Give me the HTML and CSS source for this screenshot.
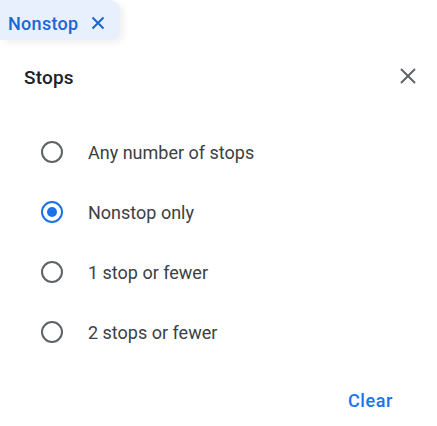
FILE: index.html
```html
<!DOCTYPE html>
<html>
<head>
<meta charset="utf-8">
<link rel="stylesheet" href="styles.css">
</head>
<body>
<div class="chip">
  <span class="chip-label">Nonstop</span>
  <svg class="chip-x" width="14" height="14" viewBox="0 0 14 14"><path d="M1.5 1.5 L12.5 12.5 M12.5 1.5 L1.5 12.5" stroke="#1967d2" stroke-width="2" fill="none"/></svg>
</div>
<div class="dialog">
  <div class="header">
    <span class="title">Stops</span>
    <svg class="close" width="16" height="16" viewBox="0 0 16 16"><path d="M1 1 L15 15 M15 1 L1 15" stroke="#5f6368" stroke-width="2" fill="none"/></svg>
  </div>
  <div class="list">
    <div class="row"><span class="radio"></span><span class="label">Any number of stops</span></div>
    <div class="row"><span class="radio checked"></span><span class="label">Nonstop only</span></div>
    <div class="row"><span class="radio"></span><span class="label">1 stop or fewer</span></div>
    <div class="row"><span class="radio"></span><span class="label">2 stops or fewer</span></div>
  </div>
  <div class="footer"><span class="clear">Clear</span></div>
</div>
</body>
</html>
```
FILE: styles.css
```css
html, body { margin: 0; padding: 0; background: #fff; }
body { font-family: Roboto, "Liberation Sans", sans-serif; width: 437px; height: 426px; overflow: hidden; }
.chip {
  width: 120px; height: 40px; box-sizing: border-box;
  background: #e8f0fe; border-radius: 0 10px 10px 0;
  display: flex; align-items: center; padding: 6px 0 0 8px;
  box-shadow: 4px 3px 6px rgba(60,64,67,0.08);
}
.chip-label { color: #1967d2; font-size: 18px; font-weight: 500; letter-spacing: 0.3px; }
.chip-x { margin-left: 13px; }
.dialog { display: flex; flex-direction: column; }
.header { height: 74px; display: flex; align-items: center; justify-content: space-between; padding: 0 21px 0 24px; }
.title { font-size: 19px; color: #202124; font-weight: 500; letter-spacing: 0.2px; }
.close { margin-top: -2px; }
.list { padding-top: 8px; display: flex; flex-direction: column; }
.row { height: 60px; display: flex; align-items: center; padding-left: 41px; }
.radio { width: 22px; height: 22px; box-sizing: border-box; border: 2px solid #5f6368; border-radius: 50%; position: relative; }
.radio.checked { border-color: #1a73e8; }
.radio.checked::after { content: ""; position: absolute; left: 4px; top: 4px; width: 10px; height: 10px; border-radius: 50%; background: #1a73e8; }
.label { margin-left: 25px; font-size: 18px; color: #3c4043; }
.footer { display: flex; justify-content: flex-end; padding: 28px 44px 0 0; }
.clear { color: #1a73e8; font-size: 18px; font-weight: 500; letter-spacing: 0.6px; }
```
